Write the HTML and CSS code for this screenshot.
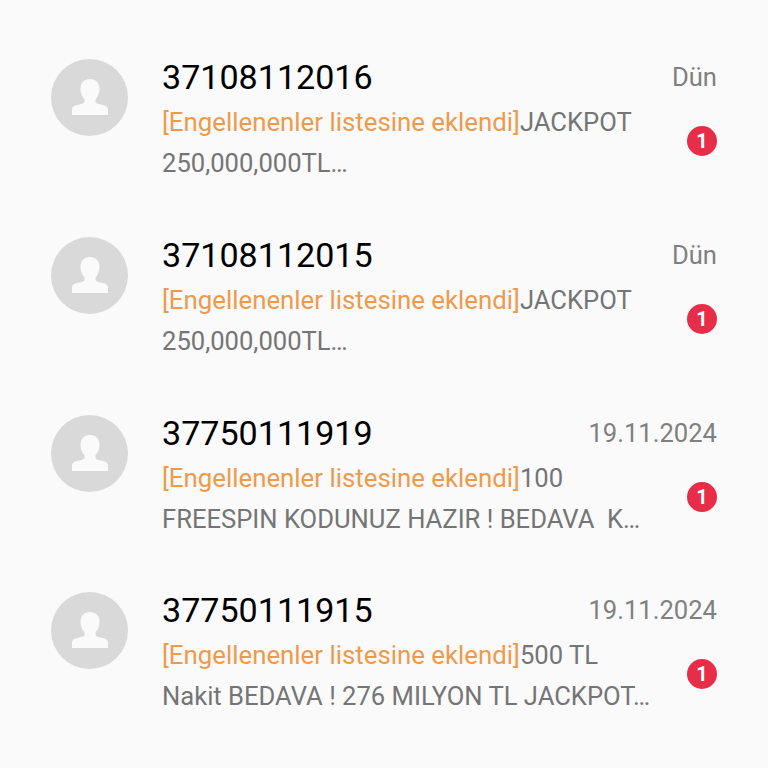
FILE: index.html
```html
<!DOCTYPE html>
<html lang="tr">
<head>
    <meta charset="UTF-8">
    <title>Engellenen mesajlar</title>
    <link rel="stylesheet" href="styles.css">
</head>
<body>
    <ul class="list">
        <li class="row">
            <div class="avatar"><svg viewBox="0 0 77 77" width="77" height="77"><path d="M39 20c-5.800 0-9.500 3.800-9.500 9.800 0 4.400 1.600 8 4 10.400v2.300c0 1.200-.8 1.800-2.200 2.200l-6.800 1.800C22.500 47.100 21 48.500 21 50.500V56h36v-5.500c0-2-1.500-3.400-3.500-4l-6.800-1.800c-1.400-.4-2.200-1-2.200-2.200v-2.300c2.400-2.400 4-6 4-10.400 0-6-3.700-9.800-9.500-9.800z"/></svg></div>
            <div class="body">
                <div class="name">37108112016</div>
                <div class="msg"><span class="tag">[Engellenenler listesine eklendi]</span>JACKPOT<br>250,000,000TL…</div>
            </div>
            <div class="side">
                <div class="date">Dün</div>
                <div class="badge">1</div>
            </div>
        </li>
        <li class="row">
            <div class="avatar"><svg viewBox="0 0 77 77" width="77" height="77"><path d="M39 20c-5.800 0-9.500 3.800-9.500 9.800 0 4.400 1.600 8 4 10.400v2.300c0 1.200-.8 1.800-2.200 2.200l-6.800 1.800C22.500 47.100 21 48.500 21 50.500V56h36v-5.500c0-2-1.500-3.400-3.500-4l-6.800-1.800c-1.400-.4-2.200-1-2.200-2.200v-2.300c2.400-2.400 4-6 4-10.400 0-6-3.700-9.800-9.500-9.800z"/></svg></div>
            <div class="body">
                <div class="name">37108112015</div>
                <div class="msg"><span class="tag">[Engellenenler listesine eklendi]</span>JACKPOT<br>250,000,000TL…</div>
            </div>
            <div class="side">
                <div class="date">Dün</div>
                <div class="badge">1</div>
            </div>
        </li>
        <li class="row">
            <div class="avatar"><svg viewBox="0 0 77 77" width="77" height="77"><path d="M39 20c-5.800 0-9.500 3.800-9.500 9.800 0 4.400 1.600 8 4 10.400v2.300c0 1.200-.8 1.800-2.200 2.200l-6.800 1.800C22.500 47.100 21 48.500 21 50.500V56h36v-5.500c0-2-1.500-3.400-3.500-4l-6.800-1.800c-1.400-.4-2.200-1-2.200-2.200v-2.300c2.400-2.400 4-6 4-10.400 0-6-3.700-9.800-9.500-9.800z"/></svg></div>
            <div class="body">
                <div class="name">37750111919</div>
                <div class="msg"><span class="tag">[Engellenenler listesine eklendi]</span>100<br>FREESPIN KODUNUZ HAZIR ! BEDAVA&nbsp; K…</div>
            </div>
            <div class="side">
                <div class="date">19.11.2024</div>
                <div class="badge">1</div>
            </div>
        </li>
        <li class="row">
            <div class="avatar"><svg viewBox="0 0 77 77" width="77" height="77"><path d="M39 20c-5.800 0-9.500 3.800-9.500 9.800 0 4.400 1.600 8 4 10.400v2.300c0 1.200-.8 1.800-2.200 2.200l-6.800 1.800C22.500 47.100 21 48.500 21 50.500V56h36v-5.500c0-2-1.500-3.400-3.500-4l-6.800-1.800c-1.400-.4-2.200-1-2.200-2.200v-2.300c2.400-2.400 4-6 4-10.400 0-6-3.700-9.800-9.500-9.800z"/></svg></div>
            <div class="body">
                <div class="name">37750111915</div>
                <div class="msg"><span class="tag">[Engellenenler listesine eklendi]</span>500 TL<br>Nakit BEDAVA ! 276 MILYON TL JACKPOT…</div>
            </div>
            <div class="side">
                <div class="date">19.11.2024</div>
                <div class="badge">1</div>
            </div>
        </li>
    </ul>
</body>
</html>
```

FILE: styles.css
```css
html, body {
    margin: 0;
    padding: 0;
}
body {
    width: 768px;
    height: 768px;
    overflow: hidden;
    background: #fafafa;
    font-family: Roboto, sans-serif;
}
.list {
    list-style: none;
    margin: 0;
    padding: 54px 0 0 0;
}
.row {
    display: flex;
    height: 177.800px;
    padding: 0 51px;
}
.avatar {
    flex: none;
    width: 77px;
    height: 77px;
    margin-top: 5px;
    border-radius: 50%;
    background: #d9d9d9;
}
.avatar svg {
    display: block;
    fill: #fafafa;
}
.body {
    flex: 1;
    margin-left: 34px;
    min-width: 0;
}
.name {
    font-size: 34.100px;
    line-height: 47px;
    color: #000;
}
.msg {
    margin-top: 1px;
    font-size: 25.600px;
    line-height: 41px;
    color: #757575;
    white-space: nowrap;
}
.tag {
    font-size: 25.800px;
    color: #ee9a4d;
}
.side {
    flex: none;
    display: flex;
    flex-direction: column;
    align-items: flex-end;
}
.date {
    font-size: 25.600px;
    line-height: 47px;
    color: #808080;
}
.badge {
    width: 30px;
    height: 30px;
    margin-top: 25px;
    border-radius: 50%;
    background: #e72d47;
    color: #fff;
    font-size: 20px;
    font-weight: 700;
    line-height: 30px;
    text-align: center;
}
```
